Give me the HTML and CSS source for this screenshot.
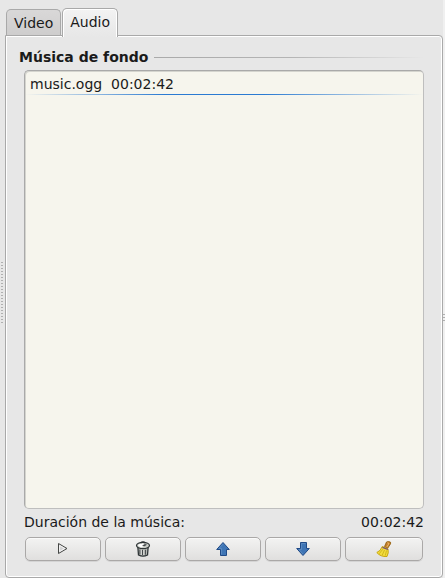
FILE: index.html
```html
<!DOCTYPE html>
<html lang="es">
<head>
<meta charset="utf-8">
<title>Audio</title>
<link rel="stylesheet" href="styles.css">
</head>
<body>
<div class="grip grip-left"><i class="dots"></i></div>
<main class="dock">
  <div class="tabs" role="tablist">
    <button class="tab" role="tab" aria-selected="false">Video</button>
    <button class="tab tab-active" role="tab" aria-selected="true">Audio</button>
  </div>
  <section class="panel" role="tabpanel">
    <h1 class="title">Música de fondo</h1>
    <div class="group">
      <ul class="list">
        <li class="track">music.ogg&nbsp; 00:02:42</li>
      </ul>
      <div class="summary"><span>Duración de la música:</span><span>00:02:42</span></div>
      <div class="actions">
        <button class="action" aria-label="Reproducir">
          <svg width="16" height="16" viewBox="0 0 16 16"><path d="M3.500 2.500v10l8.500-5z" fill="#d3d3d3" stroke="#454745"/><path d="M4.600 4.500v6l5.200-3z" fill="none" stroke="#fff" stroke-width=".8"/></svg>
        </button>
        <button class="action" aria-label="Eliminar">
          <svg width="16" height="16" viewBox="0 0 16 16"><path d="M2.800 5.500h10.400l-.7 8.500q-4.500 2.400-9 0z" fill="#b5b8b3" stroke="#2e3436" stroke-width="1.300"/><path d="M5 8.500v5M7.500 9v5M10.300 8.800v5" stroke="#43484a" stroke-width="1.200"/><path d="M6.200 8.500v5.500M8.900 8.500v5.500" stroke="#eeeeec" stroke-width=".9"/><ellipse cx="8" cy="4.500" rx="6.500" ry="3.200" fill="#c9ccc6" stroke="#2e3436" stroke-width="1.200"/><path d="M3 4q3.500-2.500 7-.8l-3 3q-3.500-.2-4-2.200z" fill="#fff"/><path d="M5.500 2q2.500-2 5 0" fill="none" stroke="#2e3436" stroke-width="1.300"/><path d="M7 4.500l3-1.500 2 .8-2.500 1.500z" fill="#43484a"/></svg>
        </button>
        <button class="action" aria-label="Subir">
          <svg width="16" height="16" viewBox="0 0 16 16"><path d="M8 1.500L14.300 8.500H11.500v6h-6v-6H1.700z" fill="#3f75b5" stroke="#204a87"/><path d="M8 3.200L4 7.500h2.500v6" fill="none" stroke="#5f8fc4" stroke-width=".8"/></svg>
        </button>
        <button class="action" aria-label="Bajar">
          <svg width="16" height="16" viewBox="0 0 16 16"><path d="M8 14.500L14.300 7.500H11.500v-6h-6v6H1.700z" fill="#3f75b5" stroke="#204a87"/><path d="M10.500 2.500h-4v6H4l4 4.500" fill="none" stroke="#5f8fc4" stroke-width=".8"/></svg>
        </button>
        <button class="action" aria-label="Limpiar">
          <svg width="16" height="16" viewBox="0 0 16 16"><path d="M8.500 5.500l2-4.500q2-1.200 4 .2.500.8-.2 2L11.500 7.500z" fill="#c17d2b" stroke="#8f5902" stroke-width=".8"/><path d="M11.300 1.800l1.700.7-2.200 3.500" fill="none" stroke="#f0bd70" stroke-width=".9"/><path d="M6.200 5.500l5.800 2.300q1 4-1 7.700Q4.500 16 .8 11.500q4-1.500 5.400-6z" fill="#f2dc3c" stroke="#c4a000" stroke-width=".9"/><path d="M6.800 8.200l-3.500 4.500M8.500 9l-2.200 5M10.500 9.500l-1.200 5" stroke="#c9ad14" stroke-width=".8"/><path d="M6.400 6.300l5.600 2.200" stroke="#75507b" stroke-width="1.300"/></svg>
        </button>
      </div>
    </div>
  </section>
</main>
<div class="grip grip-right"><i class="dots dots-short"></i></div>
</body>
</html>
```
FILE: styles.css
```css
* { box-sizing: border-box; }

body {
  margin: 0;
  display: flex;
  height: 100vh;
  background: #e7e7e7;
  color: #1a1a1a;
  font: 14px/18px "DejaVu Sans", sans-serif;
}

button {
  margin: 0;
  padding: 0;
  font: inherit;
  color: inherit;
}

.grip {
  display: flex;
  align-items: center;
  flex: none;
}

.grip-left {
  width: 5px;
  padding: 8px 1px 0;
}

.grip-right {
  width: 2px;
  padding-top: 58px;
  background: #f0f0f0;
}

.dots {
  width: 2px;
  height: 63px;
  background: repeating-linear-gradient(#b0b0b0 0 1px, transparent 1px 3px);
}

.dots-short { height: 9px; }

.dock {
  flex: 1;
  min-width: 0;
  display: flex;
  flex-direction: column;
  padding-top: 8px;
}

.tabs {
  display: flex;
  align-items: flex-end;
  gap: 1px;
  padding-left: 1px;
}

.tab {
  height: 26px;
  padding: 0 7px;
  border: 1px solid #a9a9a9;
  border-bottom: 0;
  border-radius: 5px 5px 0 0;
  background: linear-gradient(#d9d8d8, #cecdcd);
}

.tab-active {
  z-index: 1;
  height: 29px;
  margin-bottom: -2px;
  padding-bottom: 2px;
  background: linear-gradient(#f3f3f3, #e7e7e7);
  box-shadow: inset 1px 1px #fff, inset -1px 0 #fff;
}

.panel {
  flex: 1;
  display: flex;
  flex-direction: column;
  padding: 12px 18px 16px 13px;
  border: 1px solid #a9a9a9;
  border-radius: 0 4px 4px 4px;
  box-shadow: inset 0 0 0 1px #fff;
}

.title {
  display: flex;
  align-items: center;
  gap: 6px;
  margin: 0 0 4px;
  font-size: 14px;
  line-height: 18px;
}

.title::after {
  content: "";
  flex: 1;
  height: 1px;
  margin-top: 1px;
  background: linear-gradient(90deg, #aaa, #b4b4b4 50%, transparent);
}

.group {
  flex: 1;
  display: flex;
  flex-direction: column;
  padding-left: 5px;
}

.list {
  flex: 1;
  margin: 0;
  padding: 3px 0;
  list-style: none;
  border: 1px solid #a9a9a9;
  border-right-color: #bebebe;
  border-bottom-color: #bebebe;
  border-radius: 5px;
  background: #f6f5ed;
  box-shadow: inset 1px 1px #d4d4ce;
}

.track { padding: 1px 5px 0; }

.track::after {
  content: "";
  display: block;
  height: 1px;
  margin: 1px -5px 0;
  background: linear-gradient(90deg, #2a7ad200, #2a7ad2 35%, #2a7ad2 60%, #2a7ad200);
}

.summary {
  display: flex;
  justify-content: space-between;
  padding: 4px 0 6px;
}

.actions {
  display: grid;
  grid-template-columns: repeat(5, 1fr);
}

.action {
  display: flex;
  align-items: center;
  justify-content: center;
  height: 24px;
  margin: 0 3px 0 1px;
  border: 1px solid #aaa8a7;
  border-radius: 5px;
  background: linear-gradient(#f3f3f2, #e0dfde);
  box-shadow: inset 0 1px #fafafa, 0 1px #d4d4d4;
}

.action:last-child { margin-right: 1px; }
```
